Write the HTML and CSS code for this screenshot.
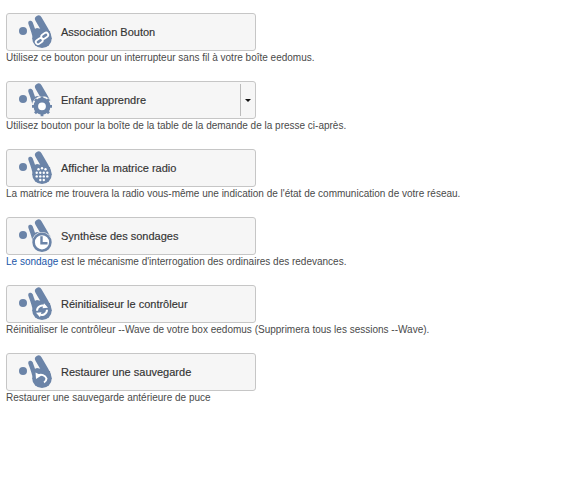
FILE: index.html
```html
<!DOCTYPE html>
<html lang="fr">
<head>
<meta charset="utf-8">
<title>Outils</title>
<link rel="stylesheet" href="styles.css">
</head>
<body>
<svg class="defs" width="0" height="0" aria-hidden="true">
  <symbol id="hand" viewBox="0 0 40 36" overflow="visible">
    <circle cx="8" cy="17" r="4" fill="#6b84a8"/>
    <path d="M15.500 9L18 16" stroke="#6b84a8" stroke-width="4.600" stroke-linecap="round"/>
    <path d="M23.500 5L30.500 17" stroke="#6b84a8" stroke-width="7" stroke-linecap="round"/>
    <path d="M15.800 16.500L22 14 35 17 36 24 19 28z" fill="#6b84a8"/>
  </symbol>
</svg>
<main class="list">
  <section class="item">
    <button class="btn"><svg class="ico" viewBox="0 0 40 36"><use href="#hand" width="40" height="36"/><circle cx="27" cy="24.300" r="9.800" fill="#6b84a8"/><g fill="none" stroke="#fff" stroke-width="1.800"><rect x="20.500" y="25" width="7.500" height="4.400" rx="2.200" transform="rotate(-35 24.200 27.200)"/><rect x="26" y="19.600" width="7.500" height="4.400" rx="2.200" transform="rotate(-35 29.700 21.800)"/></g></svg><span>Association Bouton</span></button>
    <p class="desc">Utilisez ce bouton pour un interrupteur sans fil à votre boîte eedomus.</p>
  </section>
  <section class="item">
    <div class="btn"><svg class="ico" viewBox="0 0 40 36"><use href="#hand" width="40" height="36"/><circle cx="27" cy="24.300" r="10.400" fill="#f6f6f6"/><circle cx="27" cy="24.300" r="6.200" fill="#fff" stroke="#6b84a8" stroke-width="4.600"/><path d="M27 14.300v20M17 24.300h20M20 17.300l14 14M34 17.300l-14 14" stroke="#6b84a8" stroke-width="2.800" stroke-dasharray="3 14"/></svg><span>Enfant apprendre</span><span class="split"><i class="caret"></i></span></div>
    <p class="desc">Utilisez bouton pour la boîte de la table de la demande de la presse ci-après.</p>
  </section>
  <section class="item">
    <button class="btn"><svg class="ico" viewBox="0 0 40 36"><use href="#hand" width="40" height="36"/><circle cx="27" cy="24.300" r="9.800" fill="#6b84a8"/><g fill="#fff"><circle cx="23.500" cy="19.300" r="1.200"/><circle cx="27" cy="18.300" r="1.200"/><circle cx="30.500" cy="19.300" r="1.200"/><circle cx="21.700" cy="22.800" r="1.200"/><circle cx="25.300" cy="22.800" r="1.200"/><circle cx="28.800" cy="22.800" r="1.200"/><circle cx="32.300" cy="22.800" r="1.200"/><circle cx="21.700" cy="26.400" r="1.200"/><circle cx="25.300" cy="26.400" r="1.200"/><circle cx="28.800" cy="26.400" r="1.200"/><circle cx="32.300" cy="26.400" r="1.200"/><circle cx="25.300" cy="30" r="1.200"/><circle cx="28.800" cy="30" r="1.200"/></g></svg><span>Afficher la matrice radio</span></button>
    <p class="desc">La matrice me trouvera la radio vous-même une indication de l'état de communication de votre réseau.</p>
  </section>
  <section class="item">
    <button class="btn"><svg class="ico" viewBox="0 0 40 36"><use href="#hand" width="40" height="36"/><circle cx="27" cy="24.300" r="10.200" fill="#f6f6f6"/><circle cx="27" cy="24.300" r="8.400" fill="#fff" stroke="#6b84a8" stroke-width="2.600"/><path d="M26.500 18.300v7h6" fill="none" stroke="#6b84a8" stroke-width="2.400"/></svg><span>Synthèse des sondages</span></button>
    <p class="desc"><a href="#">Le sondage</a> est le mécanisme d'interrogation des ordinaires des redevances.</p>
  </section>
  <section class="item">
    <button class="btn"><svg class="ico" viewBox="0 0 40 36"><use href="#hand" width="40" height="36"/><circle cx="27" cy="24.300" r="9.800" fill="#6b84a8"/><g fill="none" stroke="#fff" stroke-width="2"><path d="M22 24.800a5.200 5.200 0 0 1 8.500-4"/><path d="M32 23.800a5.200 5.200 0 0 1-8.500 4"/></g><path d="M29 17.300l4 4.500-5.500.5zM25 31.300l-4-4.500 5.500-.5z" fill="#fff"/></svg><span>Réinitialiseur le contrôleur</span></button>
    <p class="desc">Réinitialiser le contrôleur --Wave de votre box eedomus (Supprimera tous les sessions --Wave).</p>
  </section>
  <section class="item">
    <button class="btn"><svg class="ico" viewBox="0 0 40 36"><use href="#hand" width="40" height="36"/><circle cx="27" cy="24.300" r="9.800" fill="#6b84a8"/><path d="M23 21.500a6 6 0 0 1 8.500 3 5 5 0 0 1-2.500 4" fill="none" stroke="#fff" stroke-width="2"/><path d="M20.500 18.500l.5 6.500 5.500-3.500z" fill="#fff"/></svg><span>Restaurer une sauvegarde</span></button>
    <p class="desc">Restaurer une sauvegarde antérieure de puce</p>
  </section>
</main>
</body>
</html>
```
FILE: styles.css
```css
html, body { margin: 0; background: #fff; }
.defs { position: absolute; }
.list { padding: 13px 6px 0; display: flex; flex-direction: column; gap: 11px; }
.item { height: 57px; }
.btn {
  box-sizing: border-box; display: flex; align-items: center; width: 250px; height: 38px;
  margin: 0; padding: 0 0 0 8px; border: 1px solid #c6c6c6; border-radius: 3px;
  background: #f6f6f6; color: #333; font: 11px "Liberation Sans", Arial, sans-serif;
  -webkit-text-stroke: 0.15px #333; text-align: left;
}
.ico { width: 40px; height: 36px; flex: none; margin: 0 6px 0 0; }
.split { margin-left: auto; width: 14px; height: 32px; border-left: 1px solid #bbb; display: flex; align-items: center; justify-content: center; }
.caret { width: 0; height: 0; border: 3px solid transparent; border-top-color: #111; border-bottom: 0; }
.desc { margin: 0; height: 13px; font: 10px/13px "Liberation Sans", Arial, sans-serif; color: #4a4a4a; white-space: nowrap; }
.desc a { color: #1a56a8; text-decoration: none; }
```
